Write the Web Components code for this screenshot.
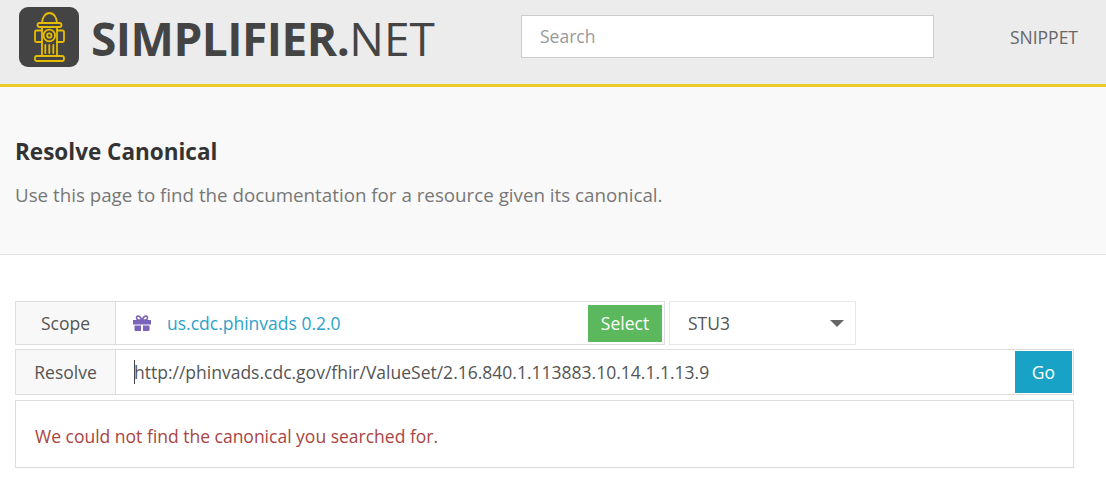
<!DOCTYPE html>
<html>
<head>
<meta charset="utf-8">
<title>Simplifier.net</title>
<style>
  html, body { margin: 0; padding: 0; background: #fff; }
  body { font-family: "Open Sans", sans-serif; font-size: 17.5px; color: #555; }
</style>
</head>
<body>
<site-header></site-header>
<page-hero heading="Resolve Canonical">Use this page to find the documentation for a resource given its canonical.</page-hero>
<resolve-form></resolve-form>

<script>
/* Top bar with logo, search and nav link */
class SiteHeader extends HTMLElement {
    constructor() {
        super();
        this.attachShadow({ mode: 'open' });
        this.shadowRoot.innerHTML = `
        <style>
            :host { display: block; }
            .bar {
                height: 84px;
                background: #ececec;
                border-bottom: 3px solid #eccb27;
                display: flex;
                align-items: center;
            }
            .logo { display: flex; align-items: center; margin-left: 19px; width: 502px; height: 60px; margin-top: -10px; }
            .mark { width: 60px; height: 60px; flex: none; }
            .name {
                margin-left: 12px;
                font-size: 46px;
                line-height: 60px;
                margin-top: 2px;
                color: #444;
                white-space: nowrap;
                font-weight: 700;
                letter-spacing: -0.5px;
            }
            .name span { font-weight: 500; letter-spacing: 0; }
            .search {
                box-sizing: border-box;
                width: 413px;
                height: 43px;
                margin-top: -12px;
                background: #fff;
                border: 1px solid #ccc;
                padding-left: 18px;
                font-size: 17.5px;
                line-height: 41px;
                color: #999;
            }
            .link { margin-left: auto; margin-right: 28px; margin-top: -11px; font-size: 17.5px; color: #666; }
        </style>
        <div class="bar">
            <div class="logo">
                <svg class="mark" viewBox="0 0 60 60">
                    <rect width="60" height="60" rx="9" fill="#444"/>
                    <g fill="none" stroke="#e6bc00" stroke-width="1.800" stroke-linejoin="round" stroke-linecap="round">
                        <path d="M23 16a7.500 10 0 0 1 15 0"/>
                        <rect x="18.500" y="16" width="24" height="4" rx="2"/>
                        <path d="M23 20v29M38 20v29"/>
                        <path d="M23 23.500h-5.500a1.500 1.500 0 0 0-1.500 1.500v8.500a1.500 1.500 0 0 0 1.500 1.500h5.500M38 23.500h5.500a1.500 1.500 0 0 1 1.500 1.500v8.500a1.500 1.500 0 0 1-1.500 1.500h-5.500"/>
                        <circle cx="30.300" cy="28.500" r="5.800"/>
                        <circle cx="30.300" cy="28.500" r="2.200"/>
                        <path d="M26.300 38v8M30.300 38v8M34.300 38v8"/>
                        <rect x="16" y="49" width="29" height="5" rx="2"/>
                    </g>
                </svg>
                <div class="name">SIMPLIFIER.<span>NET</span></div>
            </div>
            <div class="search">Search</div>
            <div class="link">SNIPPET</div>
        </div>`;
    }
}

/* Grey band under the header */
class PageHero extends HTMLElement {
    constructor() {
        super();
        this.attachShadow({ mode: 'open' });
    }

    connectedCallback() {
        this.shadowRoot.innerHTML = `
        <style>
            :host { display: block; }
            .hero {
                box-sizing: border-box;
                height: 168px;
                background: #f9f9f9;
                border-bottom: 1px solid #e4e4e4;
                padding: 49px 15px 0;
            }
            h1 { margin: 0; font-size: 22.500px; line-height: 32px; font-weight: 700; color: #333; }
            p { margin: 14px 0 0; font-size: 18.750px; line-height: 26px; color: #777; }
        </style>
        <div class="hero">
            <h1>${this.getAttribute('heading')}</h1>
            <p><slot></slot></p>
        </div>`;
    }
}

/* Label + content row, like a bootstrap input-group */
class InputRow extends HTMLElement {
    constructor() {
        super();
        this.attachShadow({ mode: 'open' });
    }

    connectedCallback() {
        this.shadowRoot.innerHTML = `
        <style>
            :host { display: block; }
            .row {
                box-sizing: border-box;
                display: flex;
                height: 100%;
                border: 1px solid #ddd;
                background: #fff;
            }
            .label {
                flex: none;
                width: 99px;
                background: #f8f8f8;
                border-right: 1px solid #ddd;
                display: flex;
                align-items: center;
                justify-content: center;
                font-size: 17.5px;
                color: #555;
            }
            .body { flex: 1; display: flex; align-items: center; min-width: 0; }
        </style>
        <div class="row">
            <div class="label">${this.getAttribute('label')}</div>
            <div class="body"><slot></slot></div>
        </div>`;
    }
}

class ActionButton extends HTMLElement {
    constructor() {
        super();
        this.attachShadow({ mode: 'open' });
        this.shadowRoot.innerHTML = `
        <style>
            :host {
                display: flex;
                align-items: center;
                justify-content: center;
                flex: none;
                color: #fff;
                font-size: 17.5px;
                background: var(--btn-bg, #5cb85c);
            }
        </style>
        <slot></slot>`;
    }
}

class ResolveForm extends HTMLElement {
    constructor() {
        super();
        this.attachShadow({ mode: 'open' });
        this.shadowRoot.innerHTML = `
        <style>
            :host { display: block; padding: 46px 32px 0 15px; }
            .top { display: flex; gap: 4px; height: 44px; }
            .scope { width: 650px; flex: none; }
            .scope-body { display: flex; align-items: center; flex: 1; height: 42px; }
            .gift { width: 18px; height: 16px; margin-left: 17px; flex: none; }
            .pkg { margin-left: 16px; color: #2ca3c9; font-size: 17.5px; }
            .select-btn { width: 74px; height: 37px; margin: 0 2px 0 auto; --btn-bg: #5cb85c; }
            .stu {
                box-sizing: border-box;
                width: 187px;
                border: 1px solid #e8e8e8;
                display: flex;
                align-items: center;
                padding: 0 11px 0 18px;
                font-size: 17.5px;
                color: #555;
            }
            .arrow { margin-left: auto; width: 0; height: 0; border-left: 7px solid transparent; border-right: 7px solid transparent; border-top: 7px solid #666; }
            .resolve { height: 46px; margin-top: 4px; }
            .url { flex: 1; margin-left: 18px; font-size: 17.5px; color: #555; position: relative; white-space: nowrap; }
            .url::before { content: ""; position: absolute; left: 0; top: 0; width: 1px; height: 24px; background: #444; }
            .go-btn { width: 57px; height: 42px; margin-right: 1px; --btn-bg: #17a2c6; }
            .msg {
                box-sizing: border-box;
                height: 68px;
                margin-top: 5px;
                border: 1px solid #ddd;
                box-shadow: 0 1px 1px rgba(0,0,0,.05);
                padding: 3px 0 0 19px;
                display: flex;
                align-items: center;
                font-size: 17.5px;
                color: #a94442;
            }
        </style>
        <div class="top">
            <input-row class="scope" label="Scope">
                <div class="scope-body">
                    <svg class="gift" viewBox="0 0 18 16">
                        <path fill="#7a63b8" d="M0 5h18v4.500H0zM1.500 10.500h6.500V16H2.700A1.200 1.200 0 0 1 1.500 14.800zM10 10.500h6.500v4.300a1.200 1.200 0 0 1-1.200 1.200H10z"/>
                        <path fill="none" stroke="#7a63b8" stroke-width="1.600" d="M9 5C7.500 1.800 6 .8 4.800 1 3 1.300 3 4.300 5 5zM9 5c1.500-3.200 3-4.200 4.200-4 1.800.3 1.800 3.300-.2 4z"/>
                    </svg>
                    <span class="pkg">us.cdc.phinvads 0.2.0</span>
                    <action-button class="select-btn">Select</action-button>
                </div>
            </input-row>
            <div class="stu">STU3<span class="arrow"></span></div>
        </div>
        <input-row class="resolve" label="Resolve">
            <div class="scope-body" style="height:44px">
                <span class="url">http://phinvads.cdc.gov/fhir/ValueSet/2.16.840.1.113883.10.14.1.1.13.9</span>
                <action-button class="go-btn">Go</action-button>
            </div>
        </input-row>
        <div class="msg">We could not find the canonical you searched for.</div>`;
    }
}

customElements.define('site-header', SiteHeader);
customElements.define('page-hero', PageHero);
customElements.define('input-row', InputRow);
customElements.define('action-button', ActionButton);
customElements.define('resolve-form', ResolveForm);
</script>
</body>
</html>
